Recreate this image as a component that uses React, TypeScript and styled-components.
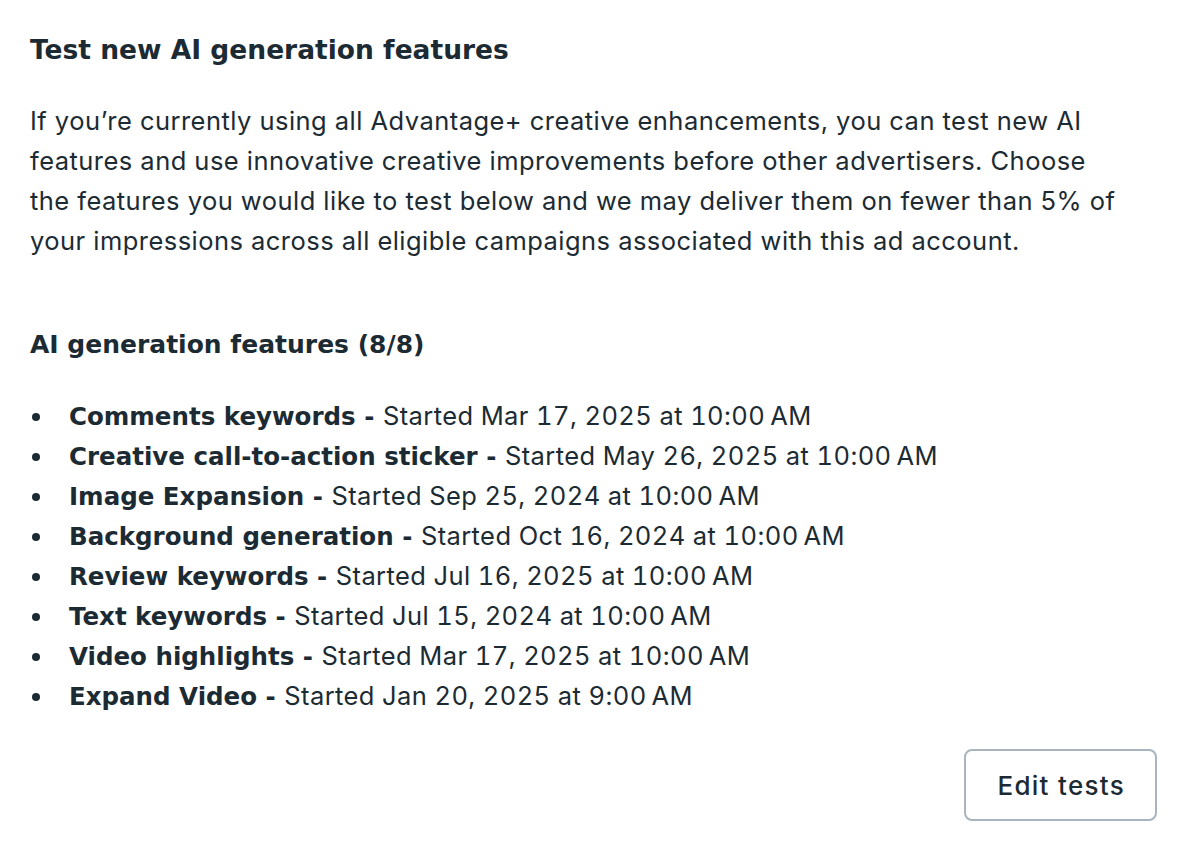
import React from 'react'
import styled, { createGlobalStyle } from 'styled-components'

const GlobalStyle = createGlobalStyle`
  html, body {
    margin: 0;
    padding: 0;
    background: #ffffff;
  }
  body {
    font-family: Inter, 'Noto Sans', 'Liberation Sans', sans-serif;
    color: #1c2b33;
    -webkit-font-smoothing: antialiased;
  }
`

const boldFont = `'DejaVu Sans', Inter, 'Liberation Sans', sans-serif`

const Panel = styled.section`
  box-sizing: border-box;
  width: 1186px;
  padding: 30px 26px 26px 30px;
  display: flex;
  flex-direction: column;
`

const Title = styled.h2`
  margin: 0;
  font-family: ${boldFont};
  font-size: 26.5px;
  line-height: 40px;
  font-weight: 700;
`

const Paragraph = styled.p`
  max-width: 1098px;
  margin: 31px 0 0;
  font-size: 25.5px;
  line-height: 40px;
  font-weight: 400;
  letter-spacing: 0.46px;
`

const SectionTitle = styled.h3`
  margin: 64px 0 0;
  font-family: ${boldFont};
  font-size: 25px;
  line-height: 40px;
  font-weight: 700;
`

const FeatureList = styled.ul`
  margin: 31px 0 0;
  padding: 0;
  list-style: none;
  display: flex;
  flex-direction: column;
`

const FeatureItem = styled.li`
  display: flex;
  align-items: center;
  height: 40px;
  font-size: 25.5px;
  line-height: 40px;
  letter-spacing: 0.4px;
  font-variant-numeric: tabular-nums;

  &::before {
    content: '';
    flex: none;
    width: 8px;
    height: 8px;
    border-radius: 50%;
    background: #1c2b33;
    margin: 2px 29px 0 2px;
  }
`

const Name = styled.strong`
  font-family: ${boldFont};
  font-size: 24.5px;
  line-height: 1;
  letter-spacing: 0;
  font-weight: 700;
  white-space: pre;
`

const Footer = styled.div`
  display: flex;
  justify-content: flex-end;
  margin-top: 33px;
  padding-right: 3px;
`

const Button = styled.button`
  box-sizing: border-box;
  height: 72px;
  padding: 0 30px 0 31px;
  border: 2px solid #a8b4be;
  border-radius: 8px;
  background: #ffffff;
  color: #1c2b33;
  font-family: inherit;
  font-size: 26px;
  font-weight: 500;
  letter-spacing: 1.3px;
  cursor: pointer;
`

const features = [
  { name: 'Comments keywords', started: 'Mar 17, 2025 at 10:00\u202fAM' },
  { name: 'Creative call-to-action sticker', started: 'May 26, 2025 at 10:00\u202fAM' },
  { name: 'Image Expansion', started: 'Sep 25, 2024 at 10:00\u202fAM' },
  { name: 'Background generation', started: 'Oct 16, 2024 at 10:00\u202fAM' },
  { name: 'Review keywords', started: 'Jul 16, 2025 at 10:00\u202fAM' },
  { name: 'Text keywords', started: 'Jul 15, 2024 at 10:00\u202fAM' },
  { name: 'Video highlights', started: 'Mar 17, 2025 at 10:00\u202fAM' },
  { name: 'Expand Video', started: 'Jan 20, 2025 at 9:00\u202fAM' },
]

const App = () => {
  return (
    <>
      <GlobalStyle />
      <Panel>
        <Title>Test new AI generation features</Title>
        <Paragraph>
          If you’re currently using all Advantage+ creative enhancements, you can
          test new AI features and use innovative creative improvements before
          other advertisers. Choose the features you would like to test below and
          we may deliver them on fewer than 5% of your impressions across all
          eligible campaigns associated with this ad account.
        </Paragraph>
        <SectionTitle>AI generation features ({features.length}/8)</SectionTitle>
        <FeatureList>
          {features.map((f) => (
            <FeatureItem key={f.name}>
              <span>
                <Name>{f.name} - </Name>
                Started {f.started}
              </span>
            </FeatureItem>
          ))}
        </FeatureList>
        <Footer>
          <Button type='button'>Edit tests</Button>
        </Footer>
      </Panel>
    </>
  )
}

export default App
